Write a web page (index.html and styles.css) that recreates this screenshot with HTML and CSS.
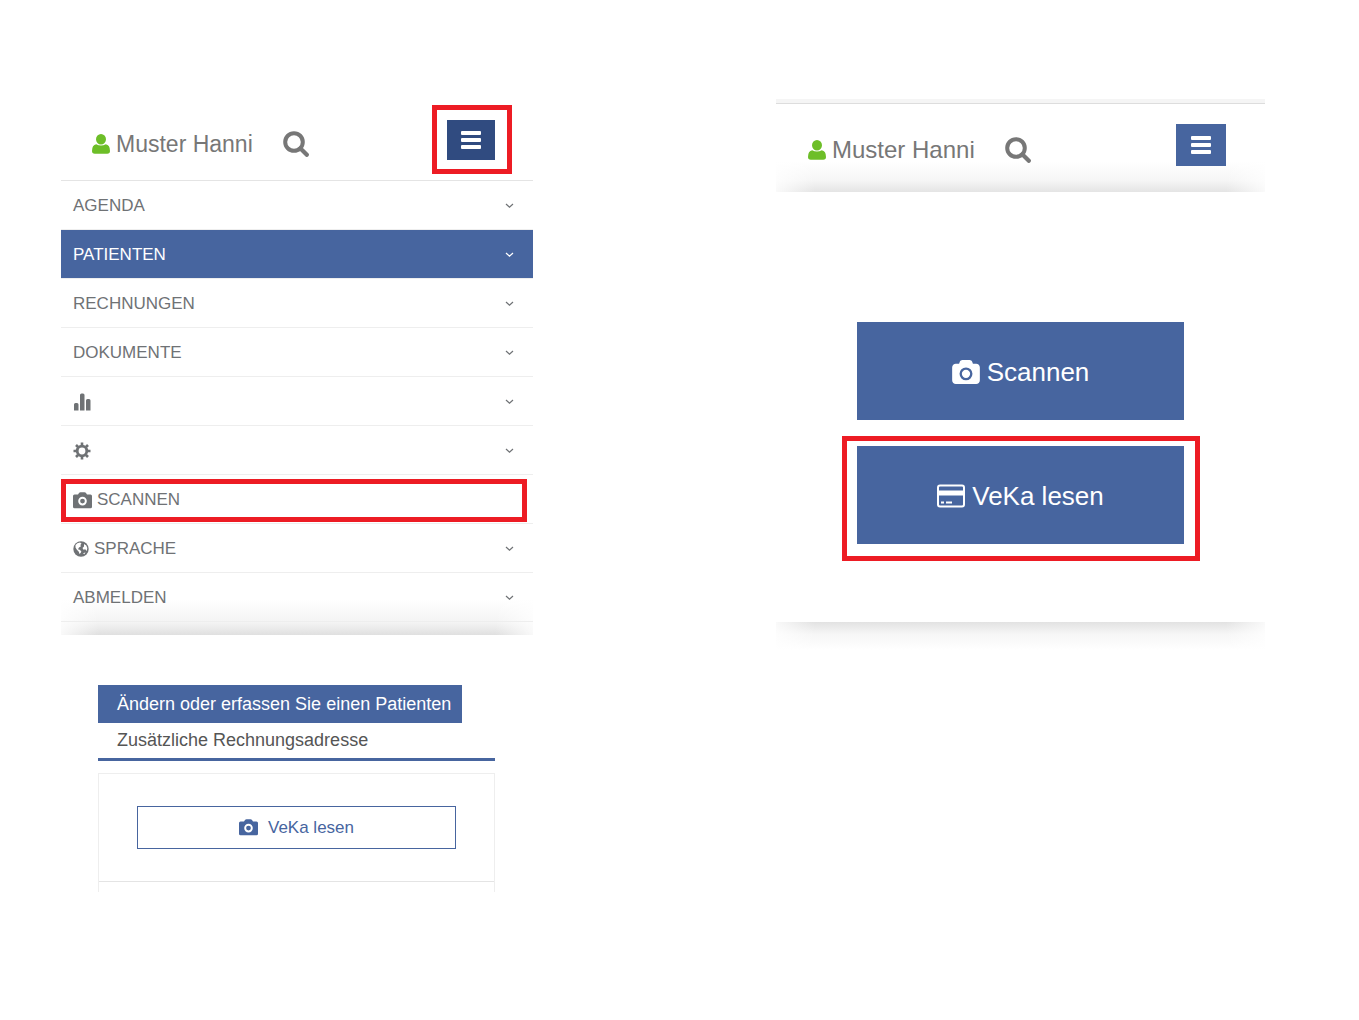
FILE: index.html
```
<!DOCTYPE html>
<html lang="de">
<head>
    <meta charset="UTF-8">
    <meta name="viewport" content="width=device-width, initial-scale=1.0">
    <title>VeKa lesen</title>
    <link rel="stylesheet" href="styles.css">
</head>
<body>
    <!-- Icons -->
    <svg class="sprite" aria-hidden="true">
        <symbol id="user" viewBox="0 0 18 20">
            <path d="M9 0a5 5.200 0 0 1 5 5.200a5 5.200 0 0 1-10 0a5 5.200 0 0 1 5-5.200zM4.200 10.200q4.800 2.600 9.600 0q4.200 0.600 4.200 6.800q0 2.700-2.800 2.700h-12.400q-2.800 0-2.800-2.700q0-6.200 4.200-6.800z"/>
        </symbol>
        <symbol id="search" viewBox="0 0 26 26">
            <circle cx="11" cy="11" r="8.800" fill="none" stroke="currentColor" stroke-width="4"/>
            <path d="M17.500 17.500l6.300 6.300" fill="none" stroke="currentColor" stroke-width="4.200" stroke-linecap="round"/>
        </symbol>
        <symbol id="bars" viewBox="0 0 22 18">
            <rect x="1" width="20" height="4" rx="1"/>
            <rect x="1" y="7" width="20" height="4" rx="1"/>
            <rect x="1" y="14" width="20" height="4" rx="1"/>
        </symbol>
        <symbol id="camera" viewBox="0 0 1920 1664">
            <path d="M960 672q119 0 203.500 84.500t84.500 203.500-84.500 203.500-203.500 84.500-203.500-84.500-84.500-203.500 84.500-203.500 203.500-84.500zm704-416q106 0 181 75t75 181v896q0 106-75 181t-181 75h-1408q-106 0-181-75t-75-181v-896q0-106 75-181t181-75h224l51-136q19-49 69.500-84.500t103.500-35.500h512q53 0 103.500 35.500t69.500 84.500l51 136h224zm-704 1152q185 0 316.500-131.500t131.500-316.500-131.500-316.500-316.500-131.500-316.500 131.500-131.500 316.500 131.500 316.500 316.500 131.500z"/>
        </symbol>
        <symbol id="camera-small" viewBox="0 0 19 17">
            <path fill-rule="evenodd" d="M1.500 2.500h3.500l1-1.500q0.500-0.800 1.500-0.800h4q1 0 1.500 0.800l1 1.500h3.500q1.500 0 1.500 1.500v10.700q0 1.500-1.500 1.500h-16q-1.500 0-1.500-1.500v-10.700q0-1.500 1.500-1.500zM9.500 4.800a4.300 4.300 0 0 0 0 8.600a4.300 4.300 0 0 0 0-8.600zM9.500 6.700a2.400 2.400 0 0 1 0 4.800a2.400 2.400 0 0 1 0-4.800z"/>
        </symbol>
        <symbol id="chart" viewBox="0 0 18 18">
            <path d="M1 17.500v-6q0-1.500 1.500-1.500h1.500q1.500 0 1.500 1.500v6zM7 17.500v-15.500q0-1.500 1.500-1.500h1.500q1.500 0 1.500 1.500v15.500zM13 17.500v-10q0-1.500 1.500-1.500h1.500q1.500 0 1.500 1.500v10z"/>
        </symbol>
        <symbol id="cog" viewBox="0 0 18 18">
            <circle cx="9" cy="9" r="4.800" fill="none" stroke="currentColor" stroke-width="2.800"/>
            <path d="M9 0.500v3M9 14.500v3M0.500 9h3M14.500 9h3M3 3l2 2M13 13l2 2M3 15l2-2M13 5l2-2" fill="none" stroke="currentColor" stroke-width="2.600"/>
        </symbol>
        <symbol id="globe" viewBox="0 0 16 16">
            <circle cx="8" cy="8" r="7.700"/>
            <path fill="#fff" d="M2.500 4q1.500-2 4.500-2.400l1.500 0.800-1.200 1.500 0.700 1.300-2 1.300-1 1.800 1.600 0.500 1.700 1.500-0.500 1.500-1.300 1.200-0.700-2.200-1.900-2-1.400-2.200zM11 3l2.300 1.500 1 2.500-0.500 3-1.600-1.800-1.700 0.600-1-1.800 1.500-1.500zM10 12.500l2.500-1.200-1.200 2z"/>
        </symbol>
        <symbol id="card" viewBox="0 0 28 23">
            <rect x="1" y="1" width="26" height="21" rx="2" fill="none" stroke="currentColor" stroke-width="2"/>
            <path d="M1 6h26v5h-26zM4 17h3v2h-3zM9 17h6v2h-6z"/>
        </symbol>
        <symbol id="chevron" viewBox="0 0 9 6">
            <path d="M1 1l3.500 3.300 3.500-3.300" fill="none" stroke="currentColor" stroke-width="1.200"/>
        </symbol>
    </svg>

    <main class="screens">
        <!-- Menü und Patient -->
        <section class="screen">
            <header class="topbar">
                <a class="patient" href="#"><svg class="icon-user"><use href="#user"/></svg>Muster Hanni</a>
                <button class="search-btn" aria-label="Suchen"><svg class="icon-search"><use href="#search"/></svg></button>
                <div class="menu-mark">
                    <button class="menu-btn active" aria-label="Menü"><svg class="icon-bars"><use href="#bars"/></svg></button>
                </div>
            </header>

            <nav class="menu">
                <a href="#">AGENDA<svg class="chevron"><use href="#chevron"/></svg></a>
                <a href="#" class="selected">PATIENTEN<svg class="chevron"><use href="#chevron"/></svg></a>
                <a href="#">RECHNUNGEN<svg class="chevron"><use href="#chevron"/></svg></a>
                <a href="#">DOKUMENTE<svg class="chevron"><use href="#chevron"/></svg></a>
                <a href="#" aria-label="Statistik"><svg class="icon-menu"><use href="#chart"/></svg><svg class="chevron"><use href="#chevron"/></svg></a>
                <a href="#" aria-label="Einstellungen"><svg class="icon-menu"><use href="#cog"/></svg><svg class="chevron"><use href="#chevron"/></svg></a>
                <a href="#" class="marked"><svg class="icon-camera"><use href="#camera-small"/></svg>SCANNEN</a>
                <a href="#"><svg class="icon-globe"><use href="#globe"/></svg>SPRACHE<svg class="chevron"><use href="#chevron"/></svg></a>
                <a href="#">ABMELDEN<svg class="chevron"><use href="#chevron"/></svg></a>
            </nav>

            <div class="content">
                <div class="tabs">
                    <a href="#" class="tab current">Ändern oder erfassen Sie einen Patienten</a>
                    <a href="#" class="tab">Zusätzliche Rechnungsadresse</a>
                </div>
                <div class="panel">
                    <div class="panel-row">
                        <button class="outline-btn"><svg class="icon-camera"><use href="#camera-small"/></svg>VeKa lesen</button>
                    </div>
                </div>
            </div>
        </section>

        <!-- Scannen -->
        <section class="screen">
            <header class="topbar scan-topbar">
                <a class="patient" href="#"><svg class="icon-user"><use href="#user"/></svg>Muster Hanni</a>
                <button class="search-btn" aria-label="Suchen"><svg class="icon-search"><use href="#search"/></svg></button>
                <button class="menu-btn" aria-label="Menü"><svg class="icon-bars"><use href="#bars"/></svg></button>
            </header>
            <div class="actions">
                <button class="action-btn"><svg class="icon-action"><use href="#camera"/></svg>Scannen</button>
                <button class="action-btn marked"><svg class="icon-action"><use href="#card"/></svg>VeKa lesen</button>
            </div>
            <div class="shade"></div>
        </section>
    </main>
</body>
</html>
```

FILE: styles.css
```
* {
    box-sizing: border-box;
}
body {
    margin: 0;
    background: #fff;
    color: #777;
    font-family: "Helvetica Neue", "Liberation Sans", Arial, sans-serif;
    font-size: 17px;
}
a {
    color: inherit;
    text-decoration: none;
}
button {
    font: inherit;
    border: none;
    padding: 0;
    cursor: pointer;
}
svg {
    fill: currentColor;
    flex: none;
}
.sprite {
    display: none;
}
.screens {
    display: grid;
    grid-template-columns: 472fr 489fr;
    column-gap: 243px;
    align-items: start;
    padding: 99px 94px 40px 61px;
}

/* Kopfzeile */
.topbar {
    display: flex;
    align-items: center;
    padding: 6px 21px 6px 31px;
    border-bottom: 1px solid #e4e4e4;
}
.patient {
    display: flex;
    align-items: center;
    gap: 6px;
    font-size: 23px;
    line-height: 28px;
    margin-top: 9px;
}
.icon-user {
    width: 18px;
    height: 20px;
    color: #6dbe28;
}
.search-btn {
    display: flex;
    background: none;
    color: #777;
    margin: 9px auto 0 30px;
}
.icon-search {
    width: 26px;
    height: 26px;
}
.menu-mark {
    border: 5px solid #ed1c24;
    padding: 10px 12px 9px 10px;
}
.menu-btn {
    display: flex;
    align-items: center;
    justify-content: center;
    width: 48px;
    height: 40px;
    background: #47659f;
    color: #fff;
}
.menu-btn.active {
    background: #304b80;
}
.icon-bars {
    width: 22px;
    height: 18px;
}

/* Menü */
.menu {
    padding-bottom: 13px;
    color: #6f7275;
    background:
        linear-gradient(to right, #fffc, transparent 8%, transparent 92%, #fffc) bottom / 100% 36px no-repeat,
        linear-gradient(to top, #e0e0e0, #f3f3f3 12px, #fff 36px);
}
.menu a {
    display: flex;
    align-items: center;
    gap: 5px;
    position: relative;
    height: 49px;
    padding: 2px 19px 0 12px;
    border-bottom: 1px solid #eee;
}
.menu .selected {
    background: #47659f;
    color: #fff;
}
.menu .marked::after {
    content: "";
    position: absolute;
    inset: 4px 6px 1px 0;
    border: 5px solid #ed1c24;
}
.chevron {
    width: 9px;
    height: 6px;
    margin-left: auto;
}
.icon-menu {
    width: 18px;
    height: 18px;
}
.icon-camera {
    width: 19px;
    height: 17px;
}
.icon-globe {
    width: 16px;
    height: 16px;
}

/* Patient */
.content {
    padding: 50px 38px 0 37px;
}
.tabs {
    display: flex;
    flex-direction: column;
    align-items: flex-start;
    border-bottom: 3px solid #47659f;
}
.tab {
    padding: 0 11px 0 19px;
    color: #555;
    font-size: 18px;
    line-height: 35px;
}
.tab.current {
    background: #47659f;
    color: #fff;
    line-height: 38px;
}
.panel {
    margin-top: 12px;
    padding-bottom: 10px;
    border: 1px solid #eee;
    border-bottom: none;
}
.panel-row {
    padding: 32px 38px;
    border-bottom: 1px solid #e4e4e4;
}
.outline-btn {
    display: flex;
    align-items: center;
    justify-content: center;
    gap: 10px;
    width: 100%;
    height: 43px;
    border: 1px solid #47659f;
    background: #fff;
    color: #47659f;
}

/* Scannen */
.scan-topbar {
    border-top: 4px solid #f5f5f5;
    border-bottom: none;
    padding: 21px 39px 26px 32px;
    box-shadow: inset 0 1px #ddd;
    background:
        linear-gradient(to right, #fffc, transparent 8%, transparent 92%, #fffc) bottom / 100% 30px no-repeat,
        linear-gradient(to top, #e4e4e4, #f6f6f6 12px, #fff 30px);
}
.scan-topbar .patient {
    font-size: 24px;
}
.scan-topbar .menu-btn {
    width: 50px;
    height: 42px;
}
.actions {
    display: flex;
    flex-direction: column;
    gap: 26px;
    padding: 130px 81px 78px;
}
.action-btn {
    display: flex;
    align-items: center;
    justify-content: center;
    gap: 7px;
    position: relative;
    height: 98px;
    padding-top: 2px;
    background: #47659f;
    color: #fff;
    font-size: 26px;
}
.action-btn.marked::after {
    content: "";
    position: absolute;
    inset: -10px -16px -17px -15px;
    border: 5px solid #ed1c24;
}
.icon-action {
    width: 28px;
    height: 24px;
}
.shade {
    height: 28px;
    background:
        linear-gradient(to right, #fffc, transparent 8%, transparent 92%, #fffc),
        linear-gradient(#e2e2e2, #f6f6f6 12px, #fff);
}
```
